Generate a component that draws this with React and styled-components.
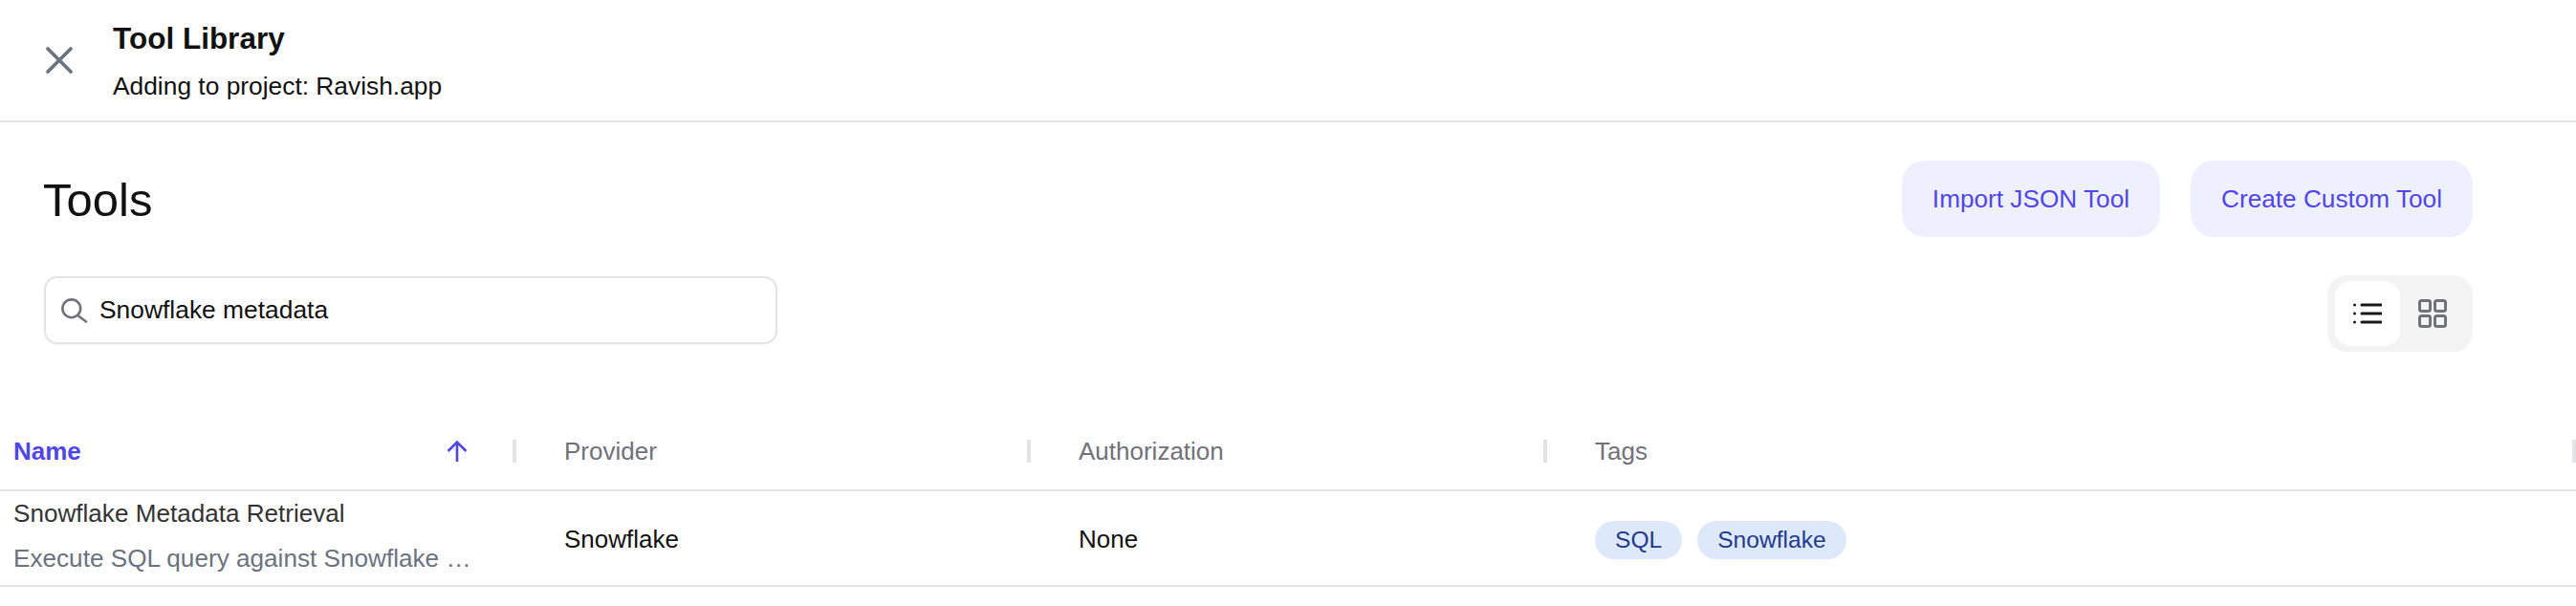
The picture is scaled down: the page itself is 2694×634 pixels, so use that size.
import React from "react";
import styled, { createGlobalStyle } from "styled-components";

const Global = createGlobalStyle`
  html, body { margin: 0; padding: 0; background: #fff; }
  body { font-family: "Liberation Sans", Arial, sans-serif; color: #111; }
  * { box-sizing: border-box; }
`;

const Page = styled.div`
  width: 2694px;
  height: 634px;
  overflow: hidden;
  background: #fff;
`;

const Header = styled.header`
  display: flex;
  align-items: center;
  height: 128px;
  padding-left: 48px;
  border-bottom: 2px solid #e4e4e5;
`;

const CloseBtn = styled.button`
  display: flex;
  width: 28px;
  height: 28px;
  margin-right: 42px;
  padding: 0;
  border: 0;
  background: none;
  color: #6b7280;
`;

const HeaderText = styled.div`
  display: flex;
  flex-direction: column;
  gap: 17px;
  margin-top: 3px;
`;

const Title = styled.h1`
  margin: 0;
  font-size: 31.5px;
  line-height: 34px;
  font-weight: 700;
  color: #111;
`;

const Subtitle = styled.p`
  margin: 0;
  font-size: 26.35px;
  line-height: 32px;
  color: #111;
`;

const Main = styled.main`
  padding: 40px 108px 0 45px;
`;

const TitleRow = styled.div`
  display: flex;
  align-items: center;
  justify-content: space-between;
  height: 80px;
`;

const PageTitle = styled.h2`
  margin: 2px 0 0;
  font-size: 49px;
  line-height: 56px;
  font-weight: 400;
  color: #111;
`;

const Actions = styled.div`
  display: flex;
  gap: 32px;
`;

const ActionBtn = styled.button`
  height: 80px;
  padding: 0 32px;
  border: 0;
  border-radius: 24px;
  background: #eff0fe;
  color: #4f46e5;
  font-family: inherit;
  font-size: 26.2px;
`;

const ToolRow = styled.div`
  display: flex;
  align-items: flex-start;
  justify-content: space-between;
  margin-top: 40px;
  height: 81px;
`;

const Search = styled.div`
  display: flex;
  align-items: center;
  gap: 12px;
  width: 767px;
  height: 71px;
  margin: 1px 0 0 1px;
  padding-left: 16px;
  border: 2px solid #e4e4e7;
  border-radius: 14px;
  box-shadow: 0 1px 2px rgba(0, 0, 0, 0.05);
  font-size: 26.4px;
  color: #111;
  svg { color: #71717a; }
`;

const Toggle = styled.div`
  display: flex;
  align-items: center;
  width: 152px;
  height: 80px;
  padding: 6px 8px;
  border-radius: 20px;
  background: #f3f3f4;
`;

const ToggleItem = styled.div`
  display: flex;
  align-items: center;
  justify-content: center;
  width: 68px;
  height: 68px;
  border-radius: 16px;
  background: ${(p) => (p.$active ? "#fff" : "transparent")};
  color: ${(p) => (p.$active ? "#18181b" : "#71717a")};
`;

const Table = styled.div`
  margin-top: 60px;
`;

const Grid = styled.div`
  display: grid;
  grid-template-columns: 540px 538px 540px 1fr;
`;

const HeadRow = styled(Grid)`
  height: 85px;
  padding-top: 3px;
  align-items: center;
  border-bottom: 2px solid #e4e4e5;
`;

const HeadCell = styled.div`
  display: flex;
  align-items: center;
  justify-content: space-between;
  height: 24px;
  padding-left: ${(p) => (p.$first ? "14px" : "50px")};
  padding-right: 47px;
  border-right: 4px solid #e3e3e5;
  font-size: 26px;
  font-weight: ${(p) => (p.$active ? 700 : 400)};
  color: ${(p) => (p.$active ? "#4f46e5" : "#71717a")};
  svg { color: #4f46e5; }
`;

const BodyRow = styled(Grid)`
  height: 100px;
  align-items: center;
  border-bottom: 2px solid #e4e4e5;
`;

const BodyCell = styled.div`
  padding-left: ${(p) => (p.$first ? "14px" : "50px")};
  padding-top: 3px;
  font-size: 26px;
  color: #111;
`;

const NameCell = styled(BodyCell)`
  display: flex;
  flex-direction: column;
  gap: 18px;
  padding-top: 0;
  padding-bottom: 4px;
`;

const ToolName = styled.div`
  font-size: 26.1px;
  line-height: 28px;
  color: #333;
`;

const ToolDesc = styled.div`
  white-space: nowrap;
  font-size: 26.15px;
  line-height: 30px;
  color: #6b7280;
`;

const Tags = styled.div`
  display: flex;
  gap: 16px;
`;

const Tag = styled.span`
  display: flex;
  align-items: center;
  height: 40px;
  padding: 0 21px;
  border-radius: 20px;
  background: #dee8fb;
  color: #1e3a8a;
  font-size: 24.6px;
`;

const X = () => (
  <svg width="28" height="28" viewBox="0 0 28 28" fill="none" stroke="currentColor" strokeWidth="3.7" strokeLinecap="round">
    <path d="M2 2L26 26M26 2L2 26" />
  </svg>
);

const SearchIcon = () => (
  <svg width="28" height="26" viewBox="0 0 28 26" fill="none" stroke="currentColor" strokeWidth="2.6" strokeLinecap="round">
    <circle cx="10.8" cy="10.8" r="9.4" />
    <path d="M18 18.5L26 24.5" />
  </svg>
);

const ListIcon = () => (
  <svg width="30" height="22" viewBox="0 0 30 22" fill="none">
    <path d="M9 2H29M9 11H29M9 20H29" stroke="currentColor" strokeWidth="3" strokeLinecap="round" />
    <circle cx="1.5" cy="2" r="1.5" fill="currentColor" />
    <circle cx="1.5" cy="11" r="1.5" fill="currentColor" />
    <circle cx="1.5" cy="20" r="1.5" fill="currentColor" />
  </svg>
);

const GridIcon = () => (
  <svg width="30" height="30" viewBox="0 0 30 30" fill="none" stroke="currentColor" strokeWidth="3">
    <rect x="1.5" y="1.5" width="11" height="11" rx="2" />
    <rect x="17.5" y="1.5" width="11" height="11" rx="2" />
    <rect x="1.5" y="17.5" width="11" height="11" rx="2" />
    <rect x="17.5" y="17.5" width="11" height="11" rx="2" />
  </svg>
);

const ArrowUp = () => (
  <svg width="22" height="24" viewBox="0 0 22 24" fill="none" stroke="currentColor" strokeWidth="2.6">
    <path d="M11 23V2.5M1.5 12L11 2.5L20.5 12" />
  </svg>
);

export default function App() {
  return (
    <Page>
      <Global />
      <Header>
        <CloseBtn aria-label="Close"><X /></CloseBtn>
        <HeaderText>
          <Title>Tool Library</Title>
          <Subtitle>Adding to project: Ravish.app</Subtitle>
        </HeaderText>
      </Header>
      <Main>
        <TitleRow>
          <PageTitle>Tools</PageTitle>
          <Actions>
            <ActionBtn>Import JSON Tool</ActionBtn>
            <ActionBtn>Create Custom Tool</ActionBtn>
          </Actions>
        </TitleRow>
        <ToolRow>
          <Search><SearchIcon />Snowflake metadata</Search>
          <Toggle>
            <ToggleItem $active><ListIcon /></ToggleItem>
            <ToggleItem><GridIcon /></ToggleItem>
          </Toggle>
        </ToolRow>
      </Main>
      <Table>
        <HeadRow>
          <HeadCell $first $active>Name<ArrowUp /></HeadCell>
          <HeadCell>Provider</HeadCell>
          <HeadCell>Authorization</HeadCell>
          <HeadCell>Tags</HeadCell>
        </HeadRow>
        <BodyRow>
          <NameCell $first>
            <ToolName>Snowflake Metadata Retrieval</ToolName>
            <ToolDesc>Execute SQL query against Snowflake …</ToolDesc>
          </NameCell>
          <BodyCell>Snowflake</BodyCell>
          <BodyCell>None</BodyCell>
          <BodyCell>
            <Tags><Tag>SQL</Tag><Tag>Snowflake</Tag></Tags>
          </BodyCell>
        </BodyRow>
      </Table>
    </Page>
  );
}
